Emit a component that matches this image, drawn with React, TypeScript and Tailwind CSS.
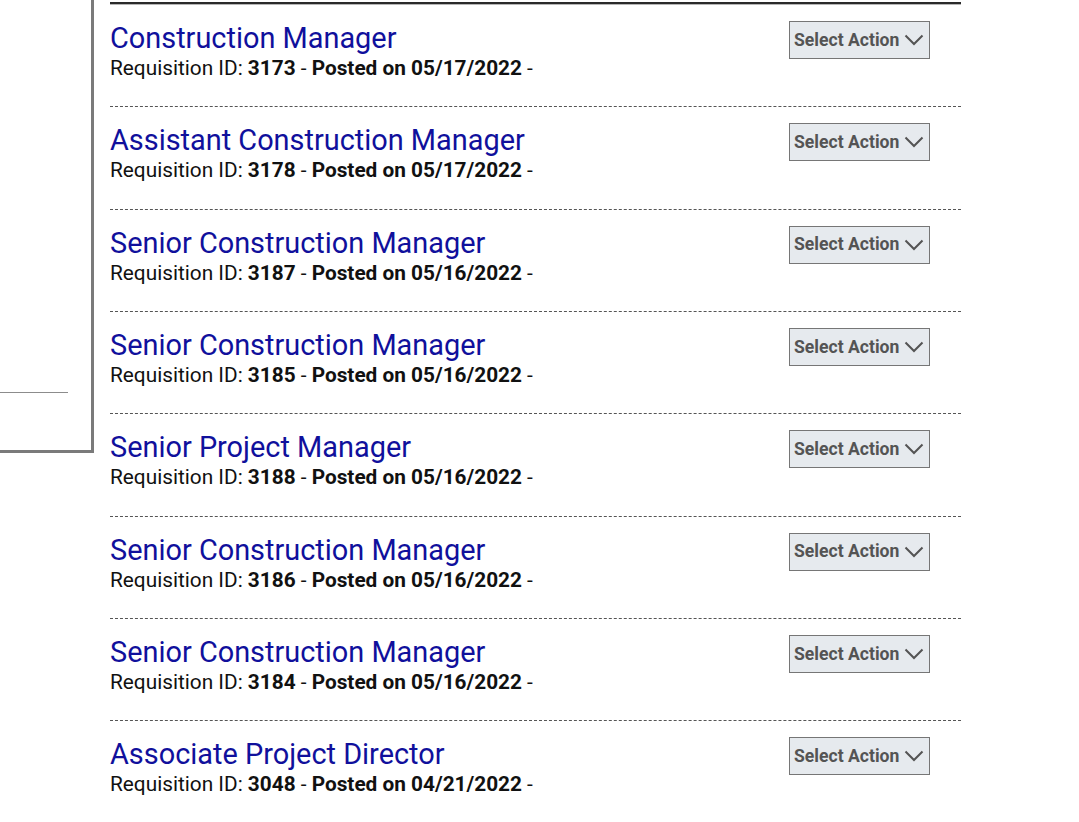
// ─── Job listings ────────────────────────────────
const jobs = [
  { title: 'Construction Manager', id: '3173', posted: '05/17/2022' },
  { title: 'Assistant Construction Manager', id: '3178', posted: '05/17/2022' },
  { title: 'Senior Construction Manager', id: '3187', posted: '05/16/2022' },
  { title: 'Senior Construction Manager', id: '3185', posted: '05/16/2022' },
  { title: 'Senior Project Manager', id: '3188', posted: '05/16/2022' },
  { title: 'Senior Construction Manager', id: '3186', posted: '05/16/2022' },
  { title: 'Senior Construction Manager', id: '3184', posted: '05/16/2022' },
  { title: 'Associate Project Director', id: '3048', posted: '04/21/2022' },
];

export default function App() {
  return (
    <div className="flex w-[1079px] h-[822px] overflow-hidden bg-white font-['Roboto',sans-serif]">
      {/* Left filter panel (cut off) */}
      <div className="shrink-0 w-[94px] self-start h-[453px] border-r-[3px] border-b-[3px] border-[#7a7a7a]">
        <div className="mt-[392px] h-px w-[68px] bg-[#8c8c8c]" />
      </div>

      {/* Results list */}
      <div className="ml-[16px] w-[851px] pt-[2px]">
        <div className="border-t-2 border-[#2a2a2a] border-b border-b-[#b5b5b5]" />
        {jobs.map((job, i) => (
          <div
            key={i}
            className={`flex justify-between h-[102.33px] ${i < jobs.length - 1 ? 'border-b border-dashed border-[#555]' : ''}`}
          >
            <div className="pt-[17px]">
              <a href="#" className="block text-[28.9px] leading-[32px] text-[#10109c]">
                {job.title}
              </a>
              <div className="text-[20.8px] leading-[28px] text-[#111]">
                Requisition ID: <b>{job.id}</b> - <b>Posted on {job.posted}</b> -
              </div>
            </div>
            <div className="pt-[16px] pr-[31px]">
              <button className="flex items-center h-[38px] w-[141px] pl-[4px] border border-[#767676] bg-[#e6eaee] text-[17.6px] font-bold text-[#545454]">
                Select Action
                <svg width="20" height="12" viewBox="0 0 20 12" className="ml-[5px]" fill="none">
                  <polyline points="1.5,1.5 10,10 18.5,1.5" stroke="#545454" strokeWidth="2" />
                </svg>
              </button>
            </div>
          </div>
        ))}
      </div>
    </div>
  );
}
